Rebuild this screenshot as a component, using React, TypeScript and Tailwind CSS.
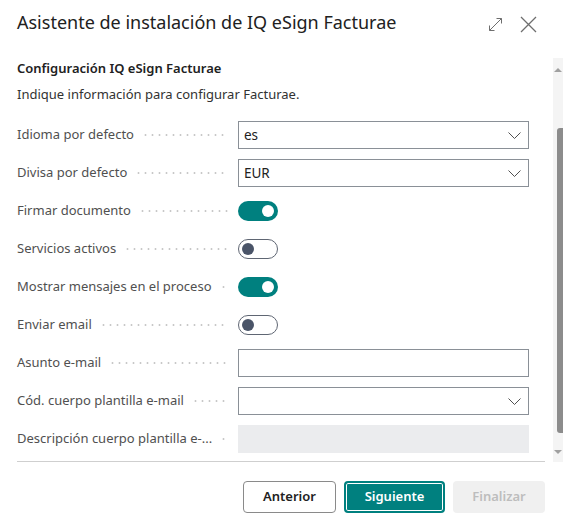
import { useState } from 'react'

type Field =
  | { label: string; kind: 'select'; value: string }
  | { label: string; kind: 'text'; value: string }
  | { label: string; kind: 'toggle'; on: boolean }
  | { label: string; kind: 'disabled' }

const fields: Field[] = [
  { label: 'Idioma por defecto', kind: 'select', value: 'es' },
  { label: 'Divisa por defecto', kind: 'select', value: 'EUR' },
  { label: 'Firmar documento', kind: 'toggle', on: true },
  { label: 'Servicios activos', kind: 'toggle', on: false },
  { label: 'Mostrar mensajes en el proceso', kind: 'toggle', on: true },
  { label: 'Enviar email', kind: 'toggle', on: false },
  { label: 'Asunto e-mail', kind: 'text', value: '' },
  { label: 'Cód. cuerpo plantilla e-mail', kind: 'select', value: '' },
  { label: 'Descripción cuerpo plantilla e-...', kind: 'disabled' },
]

function Chevron() {
  return (
    <svg width="13" height="7" viewBox="0 0 13 7" fill="none" className="text-[#505050]">
      <path d="M0.5 0.5l6 6 6-6" stroke="currentColor" strokeWidth="1" />
    </svg>
  )
}

function Toggle({ on }: { on: boolean }) {
  const [value, setValue] = useState(on)
  return (
    <button
      onClick={() => setValue(!value)}
      className={
        value
          ? 'w-10 h-5 rounded-full bg-[#00807f] flex items-center justify-end pr-[4px]'
          : 'w-10 h-5 rounded-full border border-[#5f6673] bg-white flex items-center justify-start pl-[3px]'
      }
    >
      <span className={value ? 'w-3 h-3 rounded-full bg-white' : 'w-3 h-3 rounded-full bg-[#4a5468]'} />
    </button>
  )
}

function Control({ f }: { f: Field }) {
  if (f.kind === 'toggle') return <Toggle on={f.on} />
  if (f.kind === 'disabled') return <div className="h-7 w-[291px] bg-[#ebecee]" />
  return (
    <div className="h-7 w-[291px] border border-[#8a9097] bg-white flex items-center justify-between pl-[5px] pr-[7px]">
      <span className="text-[13.5px] text-[#212121]">{f.value}</span>
      {f.kind === 'select' && <Chevron />}
    </div>
  )
}

export default function App() {
  return (
    <div className="w-[563px] h-[529px] bg-white overflow-hidden text-[#505050] font-['Segoe_UI','Noto_Sans',sans-serif]">
      <header className="h-[58px] flex items-start justify-between pl-[17px] pr-[26px] pt-[9px]">
        <h1 className="text-[18px] text-[#212121]">Asistente de instalación de IQ eSign Facturae</h1>
        <div className="flex items-center gap-[17px] pt-[7px] text-[#6e6e6e]">
          <svg width="15" height="15" viewBox="0 0 15 15" fill="none" stroke="currentColor" strokeWidth="1">
            <path d="M1.5 13.5l12-12M8.5 1.5h5v5M1.5 8.5v5h5" />
          </svg>
          <svg width="17" height="17" viewBox="0 0 17 17" fill="none" stroke="currentColor" strokeWidth="1.3">
            <path d="M1 1l15 15M16 1L1 16" />
          </svg>
        </div>
      </header>

      <div className="flex h-[404px]">
        <div className="flex-1 pl-[17px] pr-[8px] flex flex-col">
          <p className="text-[13px] font-semibold text-[#212121] pt-[1px]">Configuración IQ eSign Facturae</p>
          <p className="text-[13px] text-[#323232] mt-[6px]">Indique información para configurar Facturae.</p>
          <div className="mt-[17px] flex flex-col gap-[10px]">
            {fields.map(f => (
              <div key={f.label} className="flex items-center h-7">
                <div className="w-[221px] flex items-center pr-[10px]">
                  <span className="text-[13px] whitespace-nowrap text-[#505050]">{f.label}</span>
                  <div className="flex-1 ml-[8px] h-1 bg-[radial-gradient(circle,#c8c8c8_0.9px,transparent_1.2px)] bg-[length:7px_4px] bg-repeat-x" />
                </div>
                <Control f={f} />
              </div>
            ))}
          </div>
          <div className="mt-auto border-b border-[#cfcfcf]" />
        </div>
        <div className="w-[10px] bg-[#f4f4f4] flex flex-col items-end pt-[10px] pb-[8px]">
          <div className="w-0 h-0 mr-[1px] border-l-[4px] border-r-[4px] border-b-[4px] border-l-transparent border-r-transparent border-b-[#a0a0a0]" />
          <div className="w-[6px] bg-[#8c8c8c] rounded-l-[3px] mt-[56px] h-[305px]" />
          <div className="w-0 h-0 mt-auto mr-[1px] border-l-[4px] border-r-[4px] border-t-[4px] border-l-transparent border-r-transparent border-t-[#a0a0a0]" />
        </div>
      </div>

      <footer className="flex justify-end gap-2 pr-[18px] pt-[19px]">
        <button className="w-[93px] h-8 rounded border border-[#8a8a8a] bg-white text-[13px] font-semibold text-[#212121]">Anterior</button>
        <button className="w-[101px] h-8 rounded border-2 border-[#00807f] bg-[#00807f] text-[13px] font-semibold text-white shadow-[inset_0_0_0_1px_#fff]">Siguiente</button>
        <button className="w-[92px] h-8 rounded bg-[#f0f0f0] text-[13px] font-semibold text-[#bdbdbd]">Finalizar</button>
      </footer>
    </div>
  )
}
